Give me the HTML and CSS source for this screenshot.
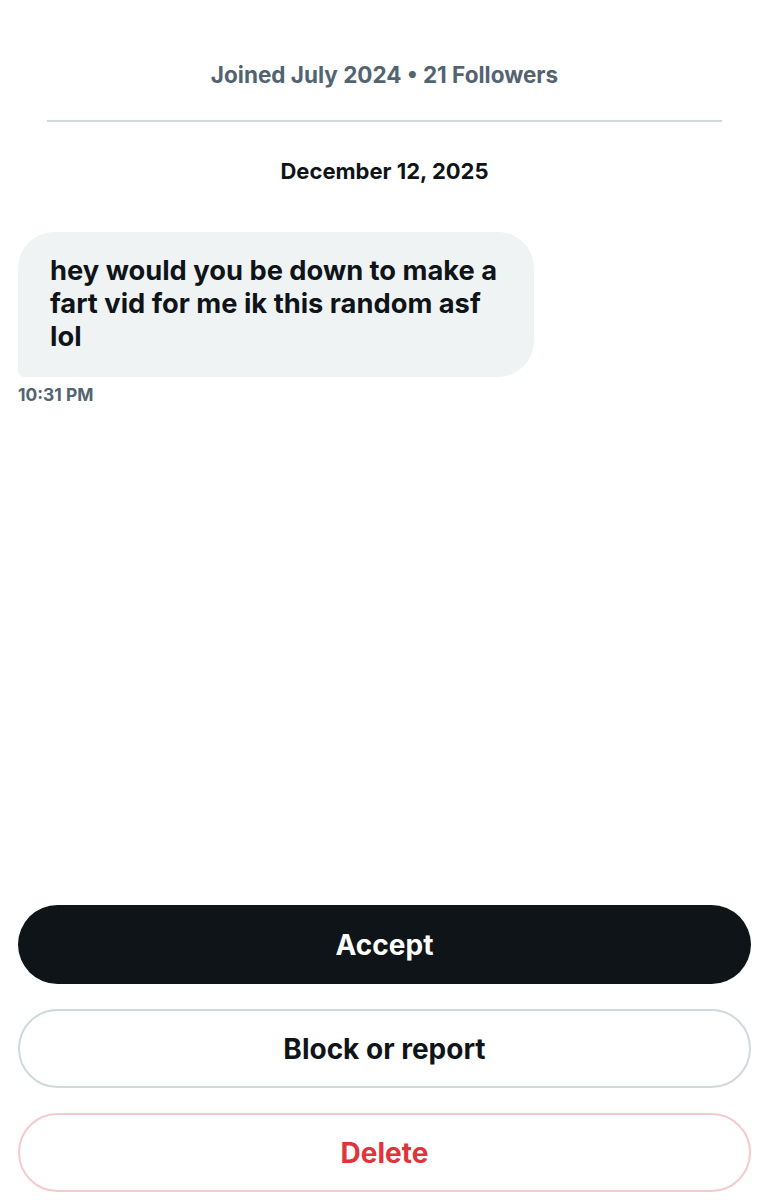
FILE: index.html
```html
<!DOCTYPE html>
<html lang="en">
<head>
    <meta charset="UTF-8">
    <meta name="viewport" content="width=device-width, initial-scale=1.0">
    <title>Message request</title>
    <link rel="stylesheet" href="styles.css">
</head>
<body>
    <div class="page">
        <div class="profile-meta">Joined July 2024 • 21 Followers</div>
        <hr class="divider">

        <div class="date-label">December 12, 2025</div>

        <div class="message">
            <div class="bubble">hey would you be down to make a fart vid for me ik this random asf lol</div>
            <div class="time">10:31 PM</div>
        </div>

        <div class="actions">
            <button class="btn btn-accept">Accept</button>
            <button class="btn btn-block">Block or report</button>
            <button class="btn btn-delete">Delete</button>
        </div>
    </div>
</body>
</html>
```

FILE: styles.css
```css
/* request screen */
body {
    margin: 0;
    background-color: #fff;
    font-family: Inter, "Liberation Sans", Arial, sans-serif;
    color: #0f1419;
}
.page {
    min-height: 1200px;
    box-sizing: border-box;
    display: flex;
    flex-direction: column;
    padding: 0 18px 8px;
}
.profile-meta {
    margin-top: 60px;
    text-align: center;
    font-size: 22.5px;
    font-weight: bold;
    color: #536471;
    line-height: 30px;
}
.divider {
    margin: 30px 29px 0;
    border: none;
    height: 2px;
    background-color: #cfd9de;
}
.date-label {
    margin-top: 35px;
    text-align: center;
    font-size: 22px;
    font-weight: bold;
    line-height: 28px;
}
.message {
    margin-top: 47px;
}
.bubble {
    width: 516px;
    box-sizing: border-box;
    padding: 22px 32px 24px;
    background-color: #eff3f4;
    border-radius: 36px 36px 36px 6px;
    font-size: 27.3px;
    font-weight: bold;
    line-height: 33px;
}
.time {
    margin-top: 7px;
    font-size: 17.4px;
    font-weight: bold;
    color: #536471;
}
.actions {
    margin-top: auto;
    display: flex;
    flex-direction: column;
    gap: 25px;
}
.btn {
    height: 79px;
    border-radius: 40px;
    font-family: inherit;
    font-size: 28px;
    font-weight: bold;
    background-color: #fff;
    cursor: pointer;
}
.btn-accept {
    background-color: #0f1419;
    border: none;
    color: #fff;
}
.btn-block {
    border: 2px solid #cfd9de;
    color: #0f1419;
}
.btn-delete {
    border: 2px solid #f6c9cc;
    color: #e0343c;
}
```
